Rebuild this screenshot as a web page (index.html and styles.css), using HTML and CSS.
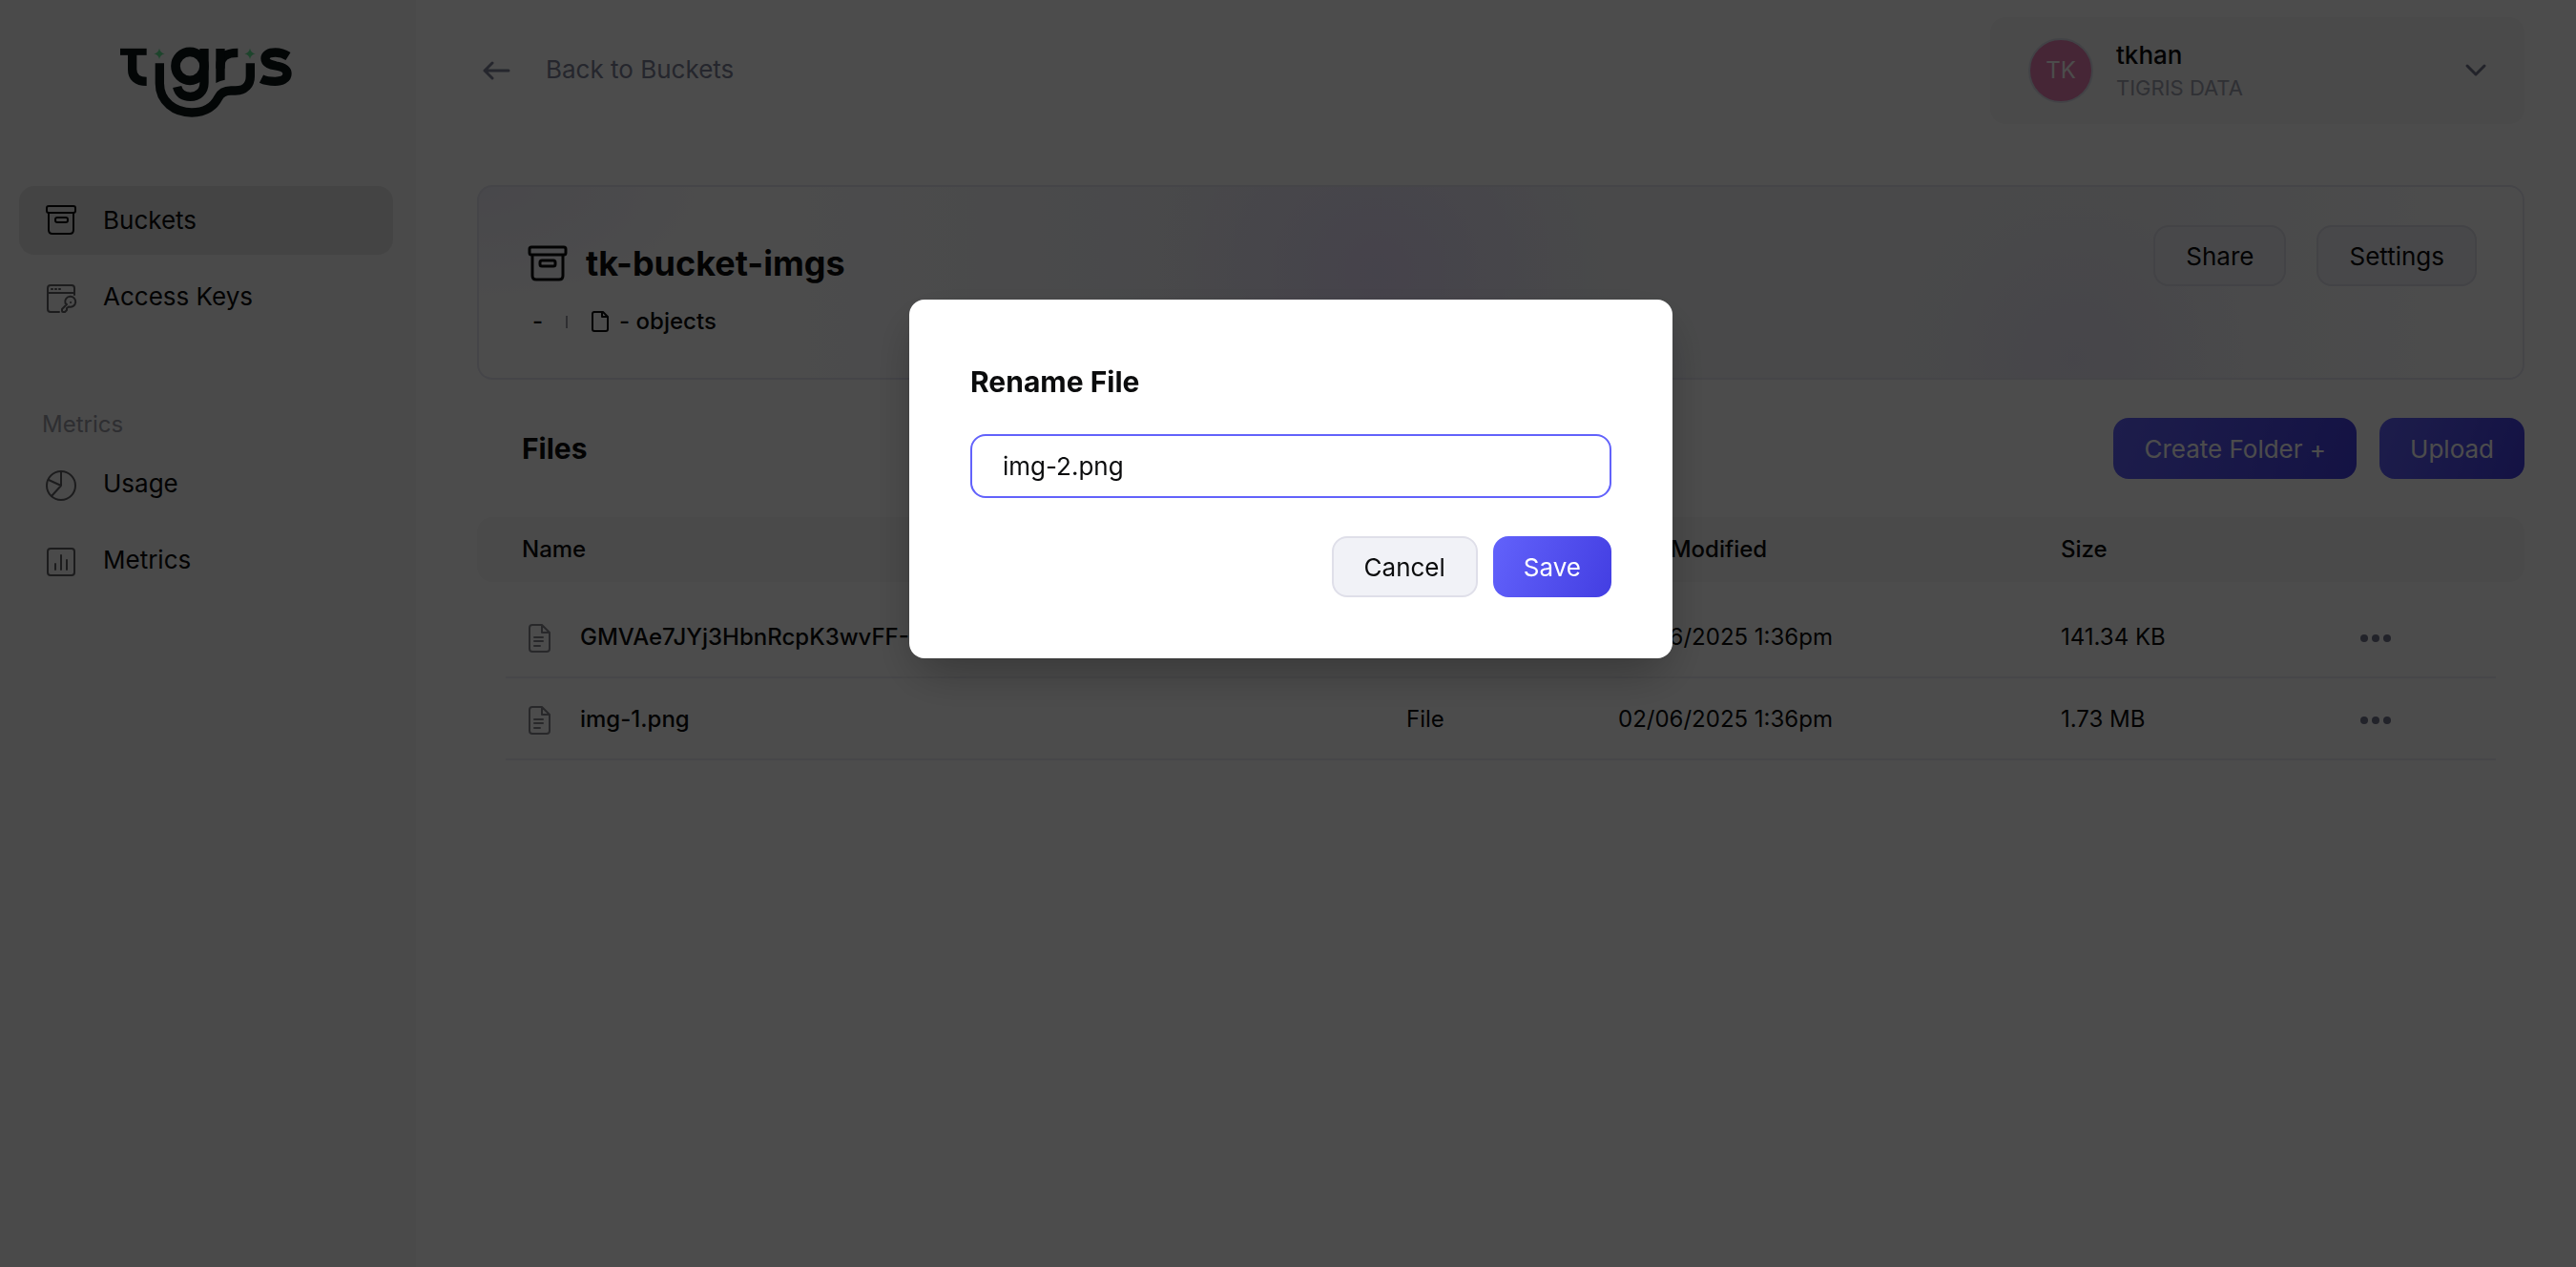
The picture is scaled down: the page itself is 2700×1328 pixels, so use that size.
FILE: index.html
```html
<!DOCTYPE html>
<html lang="en">
<head>
<meta charset="utf-8">
<title>tk-bucket-imgs | Tigris</title>
<link rel="stylesheet" href="styles.css">
</head>
<body>
<div class="app">
  <aside class="sidebar">
    <svg class="logo" viewBox="18 30 540 219" role="img" aria-label="Tigris">
      <g fill="none" stroke="#0a1417" stroke-width="28">
        <path d="M18 43H101" stroke-width="21"/>
        <path d="M56 45V98C56 122 70 136 101 136"/>
        <path d="M142 79V142C142 200 190 234 243 234C290 234 315 210 326 188C335 170 348 165 366 165H380C412 165 427 145 427 120V79"/>
        <circle cx="237" cy="88" r="45" stroke-width="29"/>
        <path d="M282 33V140C282 168 262 184 239 184C216 184 202 174 197 153"/>
        <path d="M333 95V86C333 60 350 46 388 46"/>
        <path d="M546 57C532 48 520 45 506 45C485 45 474 52 474 64C474 80 492 84 508 87C528 90 543 95 543 112C543 128 526 136 505 136C488 136 474 134 462 128"/>
      </g>
      <path fill="#0a1417" d="M319 33H347V131Q332 134 319 141Z"/>
      <path fill="#62e494" d="M141 32Q144 46 158 49Q144 52 141 66Q138 52 124 49Q138 46 141 32ZM426 32Q429 46 443 49Q429 52 426 66Q423 52 409 49Q423 46 426 32Z"/>
    </svg>
    <nav class="nav">
      <a class="nav-item active" href="#buckets">
        <svg class="nav-icon dark" viewBox="0 0 36 36"><rect x="3" y="3" width="30" height="7" rx="2"/><path d="M5 10V28Q5 32 9 32H27Q31 32 31 28V10"/><rect x="12" y="15" width="13" height="5" rx="2"/></svg>
        Buckets
      </a>
      <a class="nav-item" href="#keys">
        <svg class="nav-icon" viewBox="0 0 36 36"><path d="M16 34H7Q4 34 4 31V9Q4 6 7 6H29Q32 6 32 9V16M4 14H32"/><path d="M24 26L19 31V33Q19 34 20 34H22L24 32V30L26 28.500A5.500 5.500 0 1 0 22.500 25Z"/><path d="M8 10H9M12 10H13M16 10H17M28 24H28.100"/></svg>
        Access Keys
      </a>
      <h2 class="nav-label">Metrics</h2>
      <a class="nav-item" href="#usage">
        <svg class="nav-icon" viewBox="0 0 36 36"><circle cx="18" cy="20" r="15"/><path d="M18 5V20L5 14M18 20L8 31"/></svg>
        Usage
      </a>
      <a class="nav-item" href="#metrics">
        <svg class="nav-icon" viewBox="0 0 36 36"><rect x="4" y="6" width="28" height="28" rx="3"/><path d="M12 22V28M18 13V28M24 18V28"/></svg>
        Metrics
      </a>
    </nav>
  </aside>

  <main class="main">
    <header class="topbar">
      <a class="back" href="#back">
        <svg width="28" height="20" viewBox="0 0 28 20"><path d="M27 11H2M10 3L2 11L10 19"/></svg>
        Back to Buckets
      </a>
      <button class="account" type="button">
        <span class="avatar">TK</span>
        <span class="account-text"><span class="account-name">tkhan</span><span class="account-org">TIGRIS DATA</span></span>
        <svg width="22" height="14" viewBox="0 0 22 14"><path d="M2 2L11 11L20 2"/></svg>
      </button>
    </header>

    <section class="bucket">
      <div>
        <h1 class="bucket-title">
          <svg width="40" height="40" viewBox="0 0 40 40"><rect x="1" y="3" width="38" height="8" rx="2"/><path d="M4 11V33Q4 37 8 37H32Q36 37 36 33V11"/><rect x="12" y="17" width="16" height="6" rx="2"/></svg>
          tk-bucket-imgs
        </h1>
        <p class="bucket-meta">
          <span>-</span>
          <span class="divider"></span>
          <span class="objects"><svg width="20" height="24" viewBox="0 0 20 24"><path d="M3 2H13L18 7V20Q18 22 16 22H4Q2 22 2 20V4Q2 2 4 2M12 2V7H18"/></svg>- objects</span>
        </p>
      </div>
      <div class="bucket-actions">
        <button class="btn btn-light" type="button">Share</button>
        <button class="btn btn-light" type="button">Settings</button>
      </div>
    </section>

    <div class="files-bar">
      <h2>Files</h2>
      <div class="files-actions">
        <button class="btn btn-primary" type="button">Create Folder +</button>
        <button class="btn btn-primary" type="button">Upload</button>
      </div>
    </div>

    <table class="files">
      <colgroup><col><col class="c-type"><col class="c-date"><col class="c-size"><col class="c-more"></colgroup>
      <thead>
        <tr><th>Name</th><th>Type</th><th>Last Modified</th><th>Size</th><th></th></tr>
      </thead>
      <tbody>
        <tr>
          <td><span class="file"><svg width="24" height="32" viewBox="0 0 24 32"><path d="M4 3H14L22 11V28Q22 31 19 31H4Q1 31 1 28V6Q1 3 4 3M14 3V11H22M6 16H15M6 20H15M6 25H12"/></svg>GMVAe7JYj3HbnRcpK3wvFF-.png</span></td>
          <td>File</td><td>02/06/2025 1:36pm</td><td>141.34 KB</td>
          <td><button class="more" type="button" aria-label="More actions"><svg width="32" height="12" viewBox="0 0 32 12"><circle cx="4" cy="7" r="4"/><circle cx="16" cy="7" r="4"/><circle cx="28" cy="7" r="4"/></svg></button></td>
        </tr>
        <tr>
          <td><span class="file"><svg width="24" height="32" viewBox="0 0 24 32"><path d="M4 3H14L22 11V28Q22 31 19 31H4Q1 31 1 28V6Q1 3 4 3M14 3V11H22M6 16H15M6 20H15M6 25H12"/></svg>img-1.png</span></td>
          <td>File</td><td>02/06/2025 1:36pm</td><td>1.73 MB</td>
          <td><button class="more" type="button" aria-label="More actions"><svg width="32" height="12" viewBox="0 0 32 12"><circle cx="4" cy="7" r="4"/><circle cx="16" cy="7" r="4"/><circle cx="28" cy="7" r="4"/></svg></button></td>
        </tr>
      </tbody>
    </table>
  </main>
</div>

<div class="overlay">
  <form class="modal" role="dialog" aria-modal="true" aria-labelledby="rename-title">
    <h2><label id="rename-title" for="file-name">Rename File</label></h2>
    <input id="file-name" type="text" value="img-2.png">
    <div class="modal-actions">
      <button class="btn btn-light" type="button">Cancel</button>
      <button class="btn btn-primary" type="submit">Save</button>
    </div>
  </form>
</div>
</body>
</html>
```
FILE: styles.css
```css
* { box-sizing: border-box; }

body {
  margin: 0;
  background: #fff;
  color: #0b0c0d;
  font: 400 26px/32px Inter, "Liberation Sans", sans-serif;
}

h1, h2, p { margin: 0; }
a { color: inherit; text-decoration: none; }
button, input { font: inherit; color: inherit; }
svg { flex: none; overflow: visible; }

.app { display: flex; min-height: 100vh; }

/* Sidebar */
.sidebar {
  flex: none;
  width: 436px;
  padding: 50px 24px 40px 20px;
  background: #f7f7f7;
}
.logo { display: block; width: 180px; height: 73px; margin: 0 auto; }
.nav { display: flex; flex-direction: column; gap: 8px; margin-top: 72px; }
.nav-item {
  display: flex;
  align-items: center;
  gap: 26px;
  height: 72px;
  padding: 0 26px;
  border-radius: 16px;
}
.nav-item.active { background: #e4e4e4; }
.nav-icon {
  width: 36px;
  height: 36px;
  fill: none;
  stroke: #5f5f63;
  stroke-width: 2;
  stroke-linejoin: round;
  stroke-linecap: round;
}
.nav-icon.dark { stroke: #0b0c0d; }
.nav-label {
  margin: 74px 0 2px;
  padding-left: 24px;
  color: #9b9ca6;
  font-size: 24px;
  font-weight: 400;
}

/* Page */
.main { flex: 1; min-width: 0; padding: 18px 54px 64px 64px; }
.topbar { display: flex; justify-content: space-between; height: 112px; }
.back {
  display: flex;
  align-items: center;
  align-self: center;
  gap: 38px;
  padding: 0 0 2px 6px;
  color: #7c7f96;
}
.back svg { fill: none; stroke: currentColor; stroke-width: 3; stroke-linecap: round; stroke-linejoin: round; }

.account {
  display: flex;
  align-items: center;
  width: 560px;
  padding: 0 40px;
  border: 0;
  border-radius: 16px;
  background: #f7f7f7;
  text-align: left;
}
.avatar {
  display: grid;
  place-items: center;
  width: 68px;
  height: 68px;
  margin-right: 24px;
  border: 2px solid #dcdeea;
  border-radius: 50%;
  background: #e97fb4;
  color: #fff;
  font-size: 24px;
}
.account-text { flex: 1; display: flex; flex-direction: column; }
.account-name { line-height: 36px; font-weight: 500; }
.account-org { color: #9fa1b0; font-size: 22px; }
.account svg { fill: none; stroke: #73768c; stroke-width: 3; stroke-linecap: round; stroke-linejoin: round; }

.bucket {
  display: flex;
  justify-content: space-between;
  min-height: 204px;
  margin-top: 64px;
  padding: 40px 48px 38px 52px;
  border: 2px solid #e6e6f2;
  border-radius: 16px;
  background:
    radial-gradient(ellipse 240px 240px at 44% 45%, #e8dffa, #e8dffa00),
    radial-gradient(ellipse 180px 190px at 78% 90%, #ece8f8, #ece8f800),
    radial-gradient(ellipse 260px 130px at 0% 0%, #f1effa, #f1effa00),
    linear-gradient(90deg, #ffffff00 12%, #f3f4f9 35%, #f3f6f9 65%, #f4f5f9 82%, #ffffff00 98%);
}
.bucket-title {
  display: flex;
  align-items: center;
  gap: 20px;
  padding-top: 18px;
  font-size: 36px;
  font-weight: 700;
  line-height: 44px;
}
.bucket-title svg, .objects svg { fill: none; stroke: currentColor; stroke-width: 2; stroke-linejoin: round; }
.bucket-title svg { stroke-width: 3; }
.bucket-meta {
  display: flex;
  align-items: center;
  gap: 24px;
  margin-top: 23px;
  padding-left: 4px;
  font-size: 24px;
  font-weight: 500;
}
.divider { width: 2px; height: 13px; background: #9b9ca6; }
.objects { display: flex; align-items: center; gap: 10px; }
.bucket-actions { display: flex; align-items: flex-start; gap: 32px; }

.btn {
  height: 64px;
  padding: 2px 32px 0;
  border: 0;
  border-radius: 16px;
}
.btn-light { border: 2px solid #dfdfe9; background: #f1f2f7; }
.btn-primary {
  background: linear-gradient(110deg, #6262fb, #433ee2);
  color: #fff;
}

.files-bar {
  display: flex;
  justify-content: space-between;
  align-items: center;
  margin: 40px 0;
  padding-left: 47px;
}
.files-bar h2 { font-size: 30px; font-weight: 700; }
.files-actions { display: flex; gap: 24px; }

/* File table */
.files {
  width: 100%;
  table-layout: fixed;
  border-collapse: separate;
  border-spacing: 0;
  font-size: 24px;
}
.c-type { width: 222px; }
.c-date { width: 464px; }
.c-size { width: 314px; }
.c-more { width: 188px; }
.files th {
  height: 68px;
  padding: 0 16px;
  background: #f7f7f7;
  font-weight: 500;
  text-align: left;
}
.files th:first-child { padding-left: 47px; border-radius: 16px 0 0 16px; }
.files th:last-child { border-radius: 0 16px 16px 0; }
.files tbody::before { content: ""; display: block; height: 15px; }
.files td {
  height: 86px;
  padding: 0 16px;
  background: linear-gradient(#efeff4, #efeff4) bottom / 100% 2px no-repeat;
}
.files td:first-child {
  padding-left: 54px;
  background-position: right bottom;
  background-size: calc(100% - 30px) 2px;
  font-weight: 500;
}
.files td:last-child {
  background-position: left bottom;
  background-size: calc(100% - 30px) 2px;
}
.file { display: flex; align-items: center; gap: 30px; white-space: nowrap; }
.file svg { fill: none; stroke: #85868e; stroke-width: 2; stroke-linecap: round; stroke-linejoin: round; }
.more { display: block; padding: 0; border: 0; background: none; }
.more svg { display: block; fill: #73768c; }

/* Rename dialog */
.overlay {
  position: fixed;
  inset: 0;
  display: flex;
  justify-content: center;
  align-items: flex-start;
  padding: 314px 0 0 6px;
  background: rgba(0, 0, 0, 0.7);
}
.modal {
  width: 800px;
  padding: 64px;
  border-radius: 16px;
  background: #fff;
  box-shadow: 0 20px 50px -8px rgba(0, 0, 0, 0.3);
}
.modal h2 { font-size: 30px; font-weight: 700; line-height: 45px; }
.modal input {
  display: block;
  width: 100%;
  height: 67px;
  margin: 32px 0 40px;
  padding: 0 32px;
  border: 2px solid #6262fb;
  border-radius: 16px;
  background: #fff;
  outline: 0;
}
.modal-actions { display: flex; justify-content: flex-end; gap: 16px; }
```
